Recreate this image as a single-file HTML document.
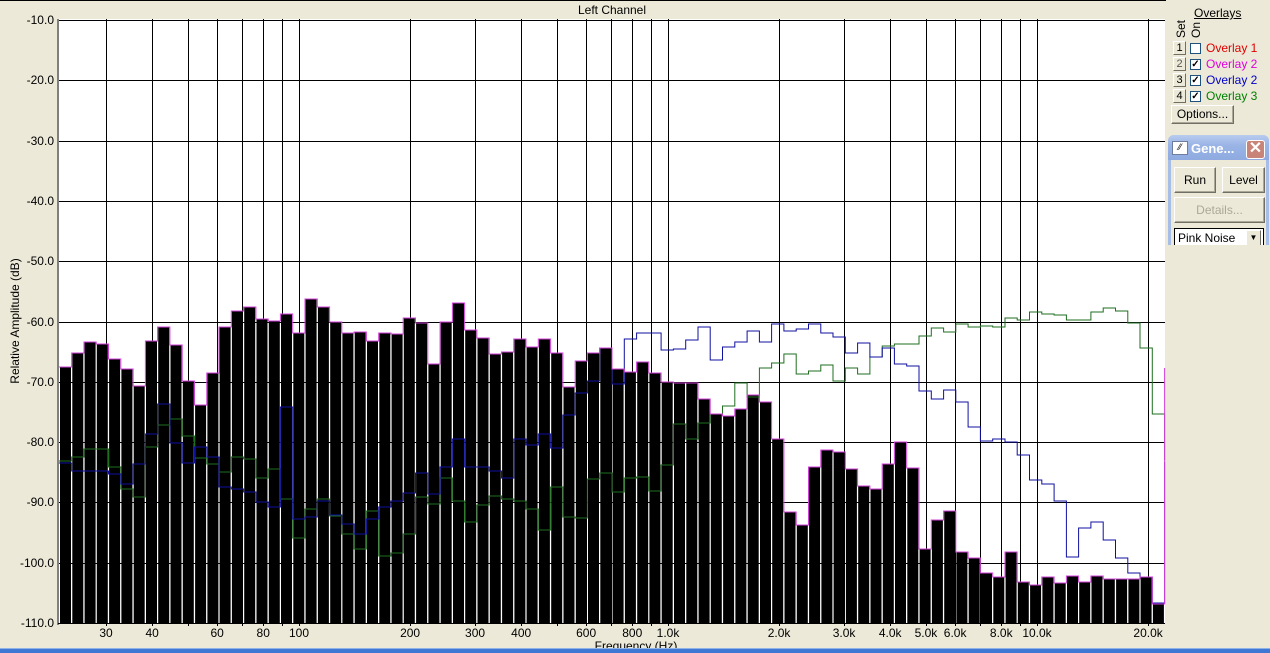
<!DOCTYPE html>
<html><head><meta charset="utf-8">
<style>
body{margin:0;width:1270px;height:653px;overflow:hidden;background:#ece9d8;font-family:"Liberation Sans",sans-serif;position:relative}
.a{position:absolute}
.yl{position:absolute;right:1216px;font-size:12px;color:#000;line-height:12px}
.btn{position:absolute;background:#ece9d8;border:1px solid;border-color:#fff #716f64 #716f64 #fff;box-shadow:inset -1px -1px #aca899;font-size:12px;text-align:center;box-sizing:border-box}
.num{position:absolute;width:13px;height:14px;left:1173px;background:#ece9d8;border:1px solid;border-color:#fff #716f64 #716f64 #fff;font-size:11px;line-height:12px;text-align:center;box-sizing:border-box}
.cb{position:absolute;left:1190px;width:11px;height:11px;background:#fff;border:1px solid #1c5180;box-sizing:border-box;font-size:10px;line-height:9px;text-align:center;font-weight:bold}
.ol{position:absolute;left:1206px;font-size:12px;line-height:12px}
</style></head><body>
<div class="a" style="left:0;top:0;width:1166px;height:1px;background:#000"></div>
<div class="a" style="left:0;top:3px;width:1166px;font-size:12px;text-align:center;padding-left:58px;box-sizing:border-box">Left Channel</div>
<svg class="a" style="left:0;top:0" width="1166" height="653" id="chart"></svg>
<div class="yl" style="top:14px">-10.0</div>
<div class="yl" style="top:74px">-20.0</div>
<div class="yl" style="top:135px">-30.0</div>
<div class="yl" style="top:195px">-40.0</div>
<div class="yl" style="top:255px">-50.0</div>
<div class="yl" style="top:316px">-60.0</div>
<div class="yl" style="top:376px">-70.0</div>
<div class="yl" style="top:436px">-80.0</div>
<div class="yl" style="top:496px">-90.0</div>
<div class="yl" style="top:557px">-100.0</div>
<div class="yl" style="top:617px">-110.0</div>
<div class="a" style="left:-60px;top:314px;width:150px;text-align:center;font-size:12px;transform:rotate(-90deg)">Relative Amplitude (dB)</div>
<div id="xl"></div>
<div class="a" style="left:536px;top:639px;width:200px;text-align:center;font-size:12px">Frequency (Hz)</div>
<div class="a" style="left:0;top:648px;width:1270px;height:1px;background:#8fb2e8"></div>
<div class="a" style="left:0;top:649px;width:1270px;height:4px;background:#3f77d4"></div>

<!-- overlays panel -->
<div class="a" style="left:1194px;top:6px;font-size:12px;text-decoration:underline">Overlays</div>
<div class="a" style="left:1172px;top:26px;font-size:12px;transform:rotate(-90deg);transform-origin:left top;top:38px;left:1174px">Set</div>
<div class="a" style="font-size:12px;transform:rotate(-90deg);transform-origin:left top;top:38px;left:1189px">On</div>
<div class="num" style="top:41px">1</div><div class="cb" style="top:43px"></div><div class="ol" style="top:42px;color:#e00000">Overlay 1</div>
<div class="num" style="top:57px;color:#555">2</div><div class="cb" style="top:59px">✓</div><div class="ol" style="top:58px;color:#e000e0">Overlay 2</div>
<div class="num" style="top:73px">3</div><div class="cb" style="top:75px">✓</div><div class="ol" style="top:74px;color:#0000c8">Overlay 2</div>
<div class="num" style="top:89px">4</div><div class="cb" style="top:91px">✓</div><div class="ol" style="top:90px;color:#008000">Overlay 3</div>
<div class="btn" style="left:1171px;top:105px;width:63px;height:19px;line-height:16px">Options...</div>

<!-- generator window -->
<div class="a" style="left:1168px;top:135px;width:101px;height:118px;background:#a6bde8;border-radius:6px 6px 0 0"></div>
<div class="a" style="left:1168px;top:135px;width:101px;height:25px;background:linear-gradient(#b8ccf0,#9ab4e6 40%,#8eaae0);border-radius:6px 6px 0 0"></div>
<div class="a" style="left:1172px;top:141px;width:14px;height:12px;background:#fff;border:1px solid #6c7da0;font-size:9px;line-height:11px;text-align:center;color:#000">⁄⁄</div>
<div class="a" style="left:1191px;top:141px;font-size:13px;font-weight:bold;color:#fff">Gene...</div>
<div class="a" style="left:1246px;top:140px;width:19px;height:19px;background:#c98479;border:1px solid #fff;border-radius:3px;box-sizing:border-box;color:#fff;font-size:16px;line-height:16px;text-align:center;font-weight:bold">✕</div>
<div class="a" style="left:1171px;top:160px;width:95px;height:93px;background:#ece9d8"></div>
<div class="btn" style="left:1174px;top:167px;width:42px;height:26px;line-height:24px">Run</div>
<div class="btn" style="left:1222px;top:167px;width:43px;height:26px;line-height:24px">Level</div>
<div class="btn" style="left:1174px;top:197px;width:91px;height:26px;line-height:24px;color:#aca899">Details...</div>
<div class="a" style="left:1174px;top:228px;width:90px;height:21px;background:#fff;border:1px solid #000;box-sizing:border-box;font-size:12px;line-height:18px;padding-left:3px">Pink Noise</div>
<div class="a" style="left:1246px;top:230px;width:15px;height:16px;background:#ece9d8;border:1px solid;border-color:#fff #716f64 #716f64 #fff;box-sizing:border-box;font-size:8px;line-height:14px;text-align:center">▼</div>
<div class="a" style="left:1166px;top:245px;width:104px;height:403px;background:#ece9d8"></div>

<script>
var tops=[367,353,342,344,359,369,386,341,327,345,381,405,373,327,311,307,319,321,314,333,299,307,322,333,332,341,333,334,318,323,364,322,303,330,338,354,352,339,347,339,353,387,361,353,348,369,372,362,373,382,383,383,399,414,416,409,395,402,439,512,525,467,450,452,469,486,489,464,442,468,549,520,511,552,558,573,577,552,582,585,577,583,576,582,576,579,579,579,577,604];
var blue=[463,471,471,471,474,484,464,434,404,443,463,447,457,487,489,492,502,507,407,519,517,501,515,524,534,519,507,501,493,473,494,467,439,467,467,471,478,439,445,434,448,415,393,381,348,384,339,333,333,350,349,340,327,360,347,342,331,342,324,331,329,324,333,337,353,343,357,348,364,366,391,399,390,402,427,441,439,442,455,480,484,501,557,528,522,540,558,573,577,603];
var green=[461,457,449,449,467,489,497,447,425,419,436,458,464,472,457,459,478,469,499,538,509,499,516,534,549,511,556,553,534,497,504,478,501,522,505,496,499,501,509,530,487,517,518,479,473,492,478,477,491,465,424,439,423,414,406,383,397,368,363,354,374,371,365,381,368,374,357,346,344,344,336,328,332,324,327,326,327,318,320,312,314,315,320,320,312,308,311,323,348,414];
var P=12.28,X0=60,s='';
s+='<rect x="58" y="19" width="1107" height="604" fill="#fff"/><rect x="57" y="19" width="2" height="606" fill="#808080"/>';
var fx=function(f){return 299+369*Math.log10(f/100)};
var fr=[];for(var d=10;d<=10000;d*=10)for(var m=1;m<10;m++){var f=d*m;if(f>=30&&f<=20000)fr.push(f)}fr.push(20000);
var g='';
fr.forEach(function(f){var x=Math.round(fx(f))+.5;g+='M'+x+' 19V626'});
for(var i=0;i<=10;i++){var y=Math.round(20+60.3*i)+.5;g+='M59 '+y+'H1165'}
s+='<path d="'+g+'" stroke="#000" stroke-width="1" fill="none"/>';
for(var k=0;k<90;k++){var x=X0+P*k;s+='<rect x="'+x.toFixed(1)+'" y="'+tops[k]+'" width="11" height="'+(623-tops[k])+'" fill="#000"/>'}
function step(a,extra){var p='M59 '+a[0];for(var k=0;k<90;k++){var x=(X0+P*k-0.6).toFixed(1),x2=(X0+P*(k+1)-0.6).toFixed(1);p+='V'+a[k]+'H'+x2;}return p+(extra||'')}
s+='<path d="'+step(green,'V460')+'" stroke="#1f6f1f" fill="none"/>';
s+='<path d="'+step(blue,'V462')+'" stroke="#1010a0" fill="none"/>';
s+='<path d="'+step(tops,'V368')+'" stroke="#d040d8" fill="none"/>';
s+='<rect x="58" y="623" width="1107" height="1" fill="#000"/>';
document.getElementById('chart').innerHTML=s;
var labs=[[30,'30'],[40,'40'],[60,'60'],[80,'80'],[100,'100'],[200,'200'],[300,'300'],[400,'400'],[600,'600'],[800,'800'],[1000,'1.0k'],[2000,'2.0k'],[3000,'3.0k'],[4000,'4.0k'],[5000,'5.0k'],[6000,'6.0k'],[8000,'8.0k'],[10000,'10.0k'],[20000,'20.0k']];
var h='';labs.forEach(function(l){h+='<div class="a" style="left:'+(fx(l[0])-30)+'px;top:626px;width:60px;text-align:center;font-size:12px">'+l[1]+'</div>'});
document.getElementById('xl').innerHTML=h;
</script>
</body></html>
